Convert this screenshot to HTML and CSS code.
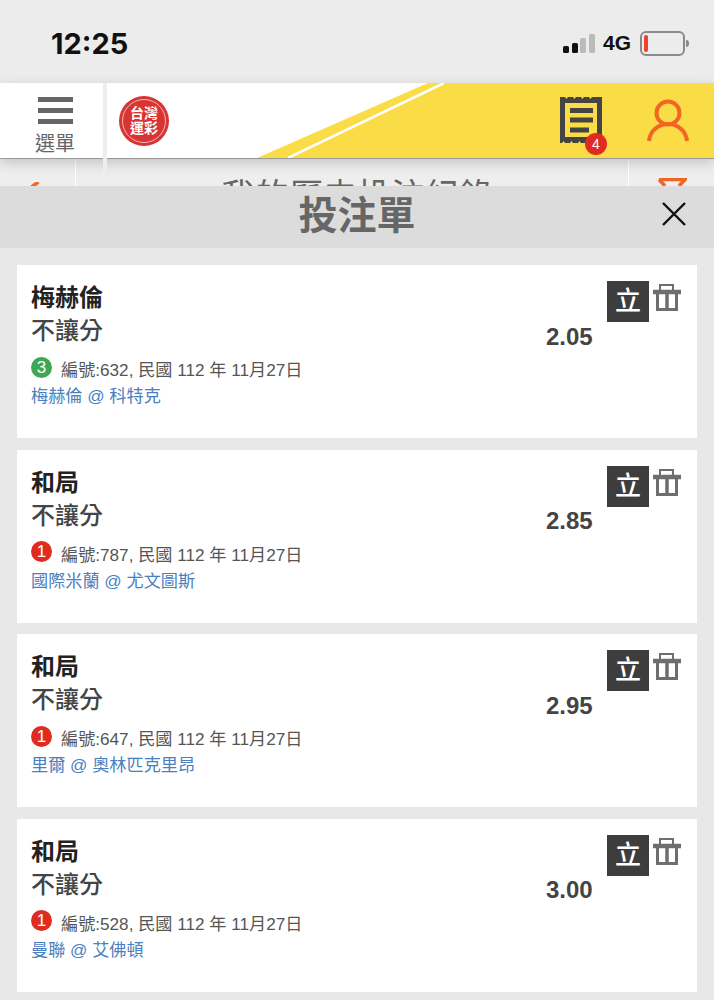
FILE: index.html
```html
<!DOCTYPE html>
<html>
<head>
  <title>投注單</title>
  <meta name="viewport" content="width=device-width, initial-scale=1.0" />
  <link rel="stylesheet" href="styles.css">
</head>
<body>
  <div class="status-bar">
    <span class="time">12:25</span>
    <div class="status-right">
      <div class="signal">
        <i class="bar b1"></i><i class="bar b2"></i><i class="bar b3 off"></i><i class="bar b4 off"></i>
      </div>
      <span class="net">4G</span>
      <div class="battery"><i class="level"></i></div>
      <i class="battery-nub"></i>
    </div>
  </div>

  <header class="header">
    <svg class="header-bg" width="714" height="75" viewBox="0 0 714 75">
      <polygon points="257,75 428,0 714,0 714,75" fill="#fadc46" />
      <line x1="288" y1="75" x2="444" y2="0" stroke="#fff" stroke-width="2.5" />
    </svg>
    <div class="menu">
      <div class="burger"><i></i><i></i><i></i></div>
      <span class="menu-label">選單</span>
    </div>
    <i class="menu-divider"></i>
    <div class="logo"><div class="logo-ring">台灣<br>運彩</div></div>
    <div class="header-icons">
      <div class="receipt">
        <svg width="42" height="46" viewBox="0 0 42 46">
          <path fill-rule="evenodd" fill="#444" d="M0 0 H5 L6.5 2 L8 0 H13 L14.5 2 L16 0 H21 L22.5 2 L24 0 H29 L30.5 2 L32 0 H42 V46 H37 L35.5 44 L34 46 H29 L27.5 44 L26 46 H21 L19.5 44 L18 46 H13 L11.5 44 L10 46 H5 L3.5 44 L2 46 H0 Z M5 6 V40 H37 V6 Z" />
          <path d="M10 13.5 H33 M10 23 H33 M10 33 H29" stroke="#444" stroke-width="5" fill="none" />
        </svg>
        <span class="count">4</span>
      </div>
      <svg class="user" width="42" height="44" viewBox="0 0 42 44">
        <circle cx="21" cy="14" r="11.5" fill="none" stroke="#f26522" stroke-width="4" />
        <path d="M2 42 C3 32 11 25 21 25 C31 25 39 32 40 42" fill="none" stroke="#f26522" stroke-width="4" />
      </svg>
    </div>
  </header>

  <div class="subheader">
    <div class="sub-left"><svg width="10" height="5" viewBox="0 0 10 5"><path d="M8.5 0 L1.5 5" stroke="#f26522" stroke-width="3.5" /></svg></div>
    <div class="sub-title">我的歷史投注紀錄</div>
    <div class="sub-right"><svg width="30" height="8" viewBox="0 0 30 8"><path d="M2 1.5 H28 L22 8 M2 1.5 L8 8" fill="none" stroke="#f26522" stroke-width="3.5" /></svg></div>
  </div>

  <div class="slip-bar">
    <h1 class="slip-title">投注單</h1>
    <svg class="close" width="26" height="26" viewBox="0 0 26 26"><path d="M2 2 L24 24 M24 2 L2 24" stroke="#111" stroke-width="2.4" /></svg>
  </div>

  <main class="slip-list">
    <div class="card">
      <div class="info">
        <div class="pick">梅赫倫</div>
        <div class="market">不讓分</div>
        <div class="meta"><span class="ball green">3</span>編號:632, 民國 112 年 11月27日</div>
        <div class="match">梅赫倫 @ 科特克</div>
      </div>
      <div class="odds">2.05</div>
      <div class="actions">
        <span class="tag">立</span>
        <svg class="trash" width="28" height="28" viewBox="0 0 28 28"><path d="M7 6 V1 H20 V6" fill="none" stroke="#6e6e6e" stroke-width="2" /><path d="M0 8 H28" stroke="#6e6e6e" stroke-width="4.5" /><path d="M4.5 10 V25.5 H23.5 V10" fill="none" stroke="#6e6e6e" stroke-width="3" /><path d="M14 10 V24" stroke="#6e6e6e" stroke-width="3.5" /></svg>
      </div>
    </div>
    <div class="card">
      <div class="info">
        <div class="pick">和局</div>
        <div class="market">不讓分</div>
        <div class="meta"><span class="ball red">1</span>編號:787, 民國 112 年 11月27日</div>
        <div class="match">國際米蘭 @ 尤文圖斯</div>
      </div>
      <div class="odds">2.85</div>
      <div class="actions">
        <span class="tag">立</span>
        <svg class="trash" width="28" height="28" viewBox="0 0 28 28"><path d="M7 6 V1 H20 V6" fill="none" stroke="#6e6e6e" stroke-width="2" /><path d="M0 8 H28" stroke="#6e6e6e" stroke-width="4.5" /><path d="M4.5 10 V25.5 H23.5 V10" fill="none" stroke="#6e6e6e" stroke-width="3" /><path d="M14 10 V24" stroke="#6e6e6e" stroke-width="3.5" /></svg>
      </div>
    </div>
    <div class="card">
      <div class="info">
        <div class="pick">和局</div>
        <div class="market">不讓分</div>
        <div class="meta"><span class="ball red">1</span>編號:647, 民國 112 年 11月27日</div>
        <div class="match">里爾 @ 奧林匹克里昂</div>
      </div>
      <div class="odds">2.95</div>
      <div class="actions">
        <span class="tag">立</span>
        <svg class="trash" width="28" height="28" viewBox="0 0 28 28"><path d="M7 6 V1 H20 V6" fill="none" stroke="#6e6e6e" stroke-width="2" /><path d="M0 8 H28" stroke="#6e6e6e" stroke-width="4.5" /><path d="M4.5 10 V25.5 H23.5 V10" fill="none" stroke="#6e6e6e" stroke-width="3" /><path d="M14 10 V24" stroke="#6e6e6e" stroke-width="3.5" /></svg>
      </div>
    </div>
    <div class="card">
      <div class="info">
        <div class="pick">和局</div>
        <div class="market">不讓分</div>
        <div class="meta"><span class="ball red">1</span>編號:528, 民國 112 年 11月27日</div>
        <div class="match">曼聯 @ 艾佛頓</div>
      </div>
      <div class="odds">3.00</div>
      <div class="actions">
        <span class="tag">立</span>
        <svg class="trash" width="28" height="28" viewBox="0 0 28 28"><path d="M7 6 V1 H20 V6" fill="none" stroke="#6e6e6e" stroke-width="2" /><path d="M0 8 H28" stroke="#6e6e6e" stroke-width="4.5" /><path d="M4.5 10 V25.5 H23.5 V10" fill="none" stroke="#6e6e6e" stroke-width="3" /><path d="M14 10 V24" stroke="#6e6e6e" stroke-width="3.5" /></svg>
      </div>
    </div>
  </main>
</body>
</html>
```

FILE: styles.css
```css
body {
  margin: 0;
  height: 1000px;
  overflow: hidden;
  background-color: #e8e8e8;
  font-family: "Liberation Sans", "Noto Sans CJK TC", sans-serif;
}
.status-bar {
  height: 83px;
  box-sizing: border-box;
  background-color: #ececec;
  display: flex;
  justify-content: space-between;
  align-items: center;
  padding: 3px 25px 0 51px;
}
.time {
  font-family: Inter, sans-serif;
  font-size: 29px;
  font-weight: 700;
  color: #111;
}
.status-right {
  display: flex;
  align-items: center;
}
.signal {
  display: flex;
  align-items: flex-end;
  gap: 2.5px;
  margin-right: 8px;
  height: 20px;
}
.bar {
  display: block;
  width: 6px;
  background-color: #111;
  border-radius: 1.5px;
}
.bar.off {
  background-color: #bbb;
}
.b1 { height: 7px; }
.b2 { height: 10px; }
.b3 { height: 15px; }
.b4 { height: 19px; }
.net {
  font-size: 21px;
  font-weight: 700;
  color: #111;
  margin-right: 9px;
}
.battery {
  width: 37px;
  height: 17px;
  border: 2px solid #8a8a8a;
  border-radius: 6px;
  padding: 2px;
}
.level {
  display: block;
  width: 4px;
  height: 100%;
  background-color: #f0402f;
  border-radius: 2px;
}
.battery-nub {
  display: block;
  width: 3px;
  height: 7px;
  margin-left: 1px;
  background-color: #8a8a8a;
  border-radius: 0 3px 3px 0;
}
.header {
  position: relative;
  z-index: 2;
  height: 75px;
  background-color: #fff;
  border-bottom: 1px solid #999;
  box-shadow: 0 4px 12px rgba(0,0,0,0.18);
  display: flex;
  align-items: flex-start;
}
.header-bg {
  position: absolute;
  left: 0;
  top: 0;
}
.menu {
  position: relative;
  width: 103px;
  box-sizing: border-box;
  padding: 14px 0 0 7px;
  display: flex;
  flex-direction: column;
  align-items: center;
  margin-right: 4px;
}
.burger {
  width: 35px;
  display: flex;
  flex-direction: column;
  gap: 6.5px;
}
.burger i {
  display: block;
  height: 4.5px;
  background-color: #666;
}
.menu-label {
  margin-top: 8px;
  font-size: 20px;
  line-height: 24px;
  color: #666;
}
.menu-divider {
  position: absolute;
  left: 103px;
  top: 0;
  width: 4px;
  height: 89px;
  background-color: #eee;
}
.logo {
  position: relative;
  width: 50px;
  height: 50px;
  margin: 13px 0 0 12px;
  border-radius: 50%;
  background-color: #d83434;
  padding: 3px;
  box-sizing: border-box;
}
.logo-ring {
  height: 100%;
  box-sizing: border-box;
  border: 1px solid #f3b9b9;
  border-radius: 50%;
  display: flex;
  align-items: center;
  justify-content: center;
  text-align: center;
  color: #fff;
  font-size: 14px;
  font-weight: 700;
  line-height: 15px;
}
.header-icons {
  position: relative;
  margin-left: auto;
  display: flex;
  align-items: flex-start;
  padding: 14px 25px 0 0;
}
.receipt {
  position: relative;
  width: 42px;
  height: 46px;
  margin-right: 45px;
}
.receipt svg {
  display: block;
}
.count {
  position: absolute;
  left: 25px;
  top: 36px;
  width: 22px;
  height: 22px;
  border-radius: 50%;
  background-color: #e02b20;
  color: #fff;
  font-size: 14px;
  line-height: 22px;
  text-align: center;
}
.user {
  margin-top: 2px;
}
.subheader {
  height: 27px;
  background-color: #eeeeee;
  overflow: hidden;
  display: flex;
  align-items: flex-start;
}
.subheader svg {
  display: block;
}
.sub-left {
  width: 76px;
  height: 27px;
  box-sizing: border-box;
  border-right: 1px solid #fff;
  padding: 23px 0 0 30px;
}
.sub-title {
  flex: 1;
  box-sizing: border-box;
  padding-left: 10px;
  text-align: center;
  font-size: 34px;
  line-height: 44px;
  margin-top: 15px;
  color: #666;
}
.sub-right {
  width: 86px;
  height: 27px;
  box-sizing: border-box;
  border-left: 1px solid #fff;
  padding: 19px 0 0 28px;
}
.slip-bar {
  position: relative;
  height: 62px;
  background-color: #dcdcdc;
  display: flex;
  align-items: center;
  justify-content: center;
}
.slip-title {
  margin: -3px 0 0;
  font-size: 39px;
  line-height: 54px;
  font-weight: 600;
  color: #666;
}
.close {
  position: absolute;
  right: 27px;
  top: 15px;
}
.slip-list {
  padding: 17px 17px 0;
  display: flex;
  flex-direction: column;
  gap: 11.5px;
}
.card {
  height: 173px;
  background-color: #fff;
  display: flex;
  align-items: flex-start;
  box-sizing: border-box;
  padding: 17px 16px 0 14px;
}
.info {
  flex: 1;
}
.pick {
  margin-top: -1px;
  font-size: 24px;
  line-height: 34px;
  font-weight: 700;
  color: #222;
}
.market {
  font-size: 24px;
  line-height: 32px;
  font-weight: 500;
  color: #444;
}
.meta {
  display: flex;
  align-items: center;
  margin-top: 10px;
  font-size: 17.15px;
  line-height: 26px;
  color: #555;
}
.ball {
  width: 21px;
  height: 21px;
  margin-right: 9px;
  position: relative;
  top: -3px;
  border-radius: 50%;
  color: #fff;
  font-size: 17px;
  line-height: 21px;
  text-align: center;
}
.ball.green { background-color: #3ea655; }
.ball.red { background-color: #e02b20; }
.match {
  font-size: 17.15px;
  line-height: 27px;
  color: #4a80c0;
}
.odds {
  width: 61px;
  margin-top: 40.5px;
  font-size: 24px;
  line-height: 28px;
  font-weight: 700;
  color: #444;
}
.actions {
  display: flex;
  align-items: flex-start;
  width: 74px;
  margin-top: -1px;
}
.tag {
  width: 42px;
  height: 41px;
  background-color: #3d3d3d;
  color: #fff;
  font-size: 26px;
  font-weight: 500;
  line-height: 41px;
  text-align: center;
}
.trash {
  margin: 3px 0 0 4px;
}
```
